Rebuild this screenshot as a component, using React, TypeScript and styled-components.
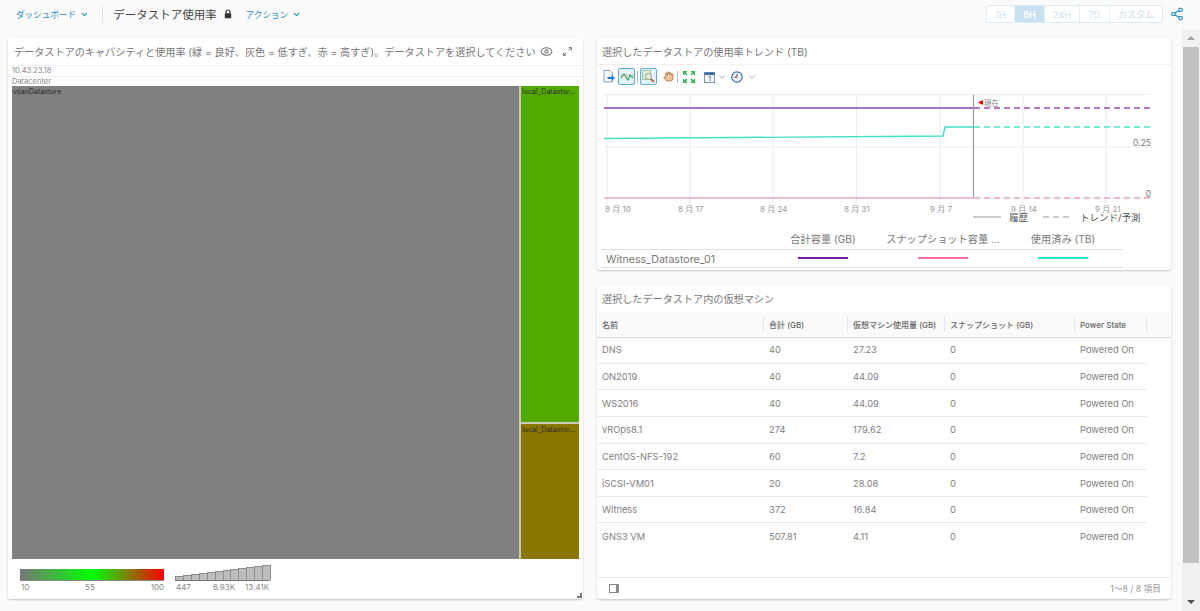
import React from "react";
import styled, { createGlobalStyle } from "styled-components";
import { ChevronDown, Eye, Hand, Share2 } from "lucide-react";

const GlobalStyle = createGlobalStyle`
  html, body { margin: 0; padding: 0; height: 100%; overflow: hidden; }
  body {
    background: #fafafa;
    font-family: "Inter", "Noto Sans CJK JP", sans-serif;
    color: #777;
  }
  * { box-sizing: border-box; }
`;

const Page = styled.div`
  width: 1200px;
  height: 611px;
  display: flex;
  flex-direction: column;
  overflow: hidden;
`;

const Header = styled.header`
  height: 30px;
  flex: none;
  display: flex;
  align-items: center;
  padding: 0 16px 2px;
`;

const NavLink = styled.a<{ $gap?: number; $lead?: number }>`
  display: flex;
  align-items: center;
  gap: 4px;
  color: #2d8ec4;
  font-size: 8.6px;
  margin-left: ${(p) => p.$lead ?? 0}px;
  margin-right: ${(p) => p.$gap ?? 0}px;
  svg { stroke-width: 3; }
`;

const HeaderDivider = styled.div`
  width: 1px;
  height: 18px;
  background: #e2e2e2;
  margin-right: 10px;
`;

const PageTitle = styled.h1`
  margin: 0 7px 0 0;
  font-size: 11.5px;
  font-weight: 400;
  color: #444;
  white-space: nowrap;
`;

const RangeGroup = styled.div`
  margin-left: auto;
  display: flex;
  height: 18px;
  border: 1.5px solid #dceaf3;
  border-radius: 2px;
  background: #fff;
`;

const RangeButton = styled.div<{ $w: number; $active?: boolean }>`
  width: ${(p) => p.$w}px;
  display: flex;
  align-items: center;
  justify-content: center;
  font-size: 9px;
  font-weight: 600;
  color: ${(p) => (p.$active ? "#fff" : "#dbe8f0")};
  background: ${(p) => (p.$active ? "#c9e1f0" : "transparent")};
  border-right: 1.5px solid #e4eff6;
  &:last-child { border-right: 0; }
`;

const ShareButton = styled.div`
  display: flex;
  margin: 0 0 0 7px;
  color: #2d8ec4;
`;

const Body = styled.div`
  flex: 1;
  display: flex;
  min-height: 0;
`;

const Content = styled.main`
  flex: 1;
  display: grid;
  grid-template-columns: 575px 574px;
  grid-template-rows: 232px 314px;
  column-gap: 14px;
  row-gap: 15px;
  padding: 8px 0 0 8px;
`;

const Card = styled.section`
  position: relative;
  background: #fff;
  border-radius: 3px;
  box-shadow: 0 1px 2px rgba(0, 0, 0, 0.22);
  display: flex;
  flex-direction: column;
  overflow: hidden;
`;

const WideCard = styled(Card)`
  grid-row: 1 / span 2;
`;

const CardHeader = styled.div<{ $plain?: boolean }>`
  height: 27px;
  flex: none;
  display: flex;
  align-items: center;
  padding: 0 5px;
  font-size: 10.15px;
  color: #777;
  white-space: nowrap;
  border-bottom: ${(p) => (p.$plain ? "0" : "1px solid #f0f0f0")};
`;

const MapHeader = styled(CardHeader)`
  padding: 0 11px 0 6px;
  justify-content: space-between;
`;

const HeaderIcons = styled.div`
  display: flex;
  flex: none;
  align-items: center;
  gap: 10px;
  color: #777;
`;

const Crumb = styled.div`
  height: 10.5px;
  line-height: 9.5px;
  padding-left: 4px;
  font-size: 7.5px;
  color: #888;
  border-top: 1px solid #f0f0f0;
`;

const Treemap = styled.div`
  margin: 0 4px;
  height: 473px;
  flex: none;
  display: flex;
  background: #c9c9b4;
  gap: 2px;
`;

const MapColumn = styled.div`
  width: 58px;
  display: flex;
  flex-direction: column;
  gap: 2px;
`;

const Tile = styled.div<{ $color: string; $grow: number }>`
  background: ${(p) => p.$color};
  flex: ${(p) => p.$grow};
  min-width: 0;
  padding: 1px 1px;
  font-size: 7.1px;
  line-height: 10px;
  color: #2c2c2c;
  white-space: nowrap;
`;

const MapLegend = styled.div`
  display: flex;
  gap: 11px;
  padding: 10px 0 0 12px;
`;

const ScaleBlock = styled.div<{ $w: number }>`
  width: ${(p) => p.$w}px;
`;

const ColorBar = styled.div`
  height: 12px;
  background: linear-gradient(90deg, #777 0%, #00ff00 50%, #ff0000 100%);
  border-bottom: 1px solid #888;
`;

const ScaleLabels = styled.div`
  display: flex;
  justify-content: space-between;
  font-size: 8px;
  line-height: 11px;
  padding: 1px 0 0 1px;
  color: #888;
  white-space: nowrap;
`;

const SizeLabels = styled(ScaleLabels)`
  justify-content: flex-start;
  span:nth-child(2) { margin: 0 10px 0 22px; }
`;

const SizeBars = styled.div`
  height: 12px;
  display: flex;
  align-items: flex-end;
  border-bottom: 1px solid #777;
`;

const SizeBar = styled.div<{ $h: number }>`
  flex: 1;
  height: ${(p) => p.$h}px;
  flex-shrink: 0;
  background: #bcbcbc;
  border: 1px solid #8d8d8d;
  border-bottom: 0;
  margin-right: -1px;
`;

const ResizeHandle = styled.div`
  position: absolute;
  right: 1px;
  bottom: 1px;
  width: 5px;
  height: 5px;
  border-right: 2px solid #777;
  border-bottom: 2px solid #777;
`;

const Toolbar = styled.div`
  height: 26px;
  flex: none;
  display: flex;
  align-items: center;
  padding: 0 0 3px 6px;
`;

const ToolSlot = styled.div<{ $active?: boolean; $ml?: number }>`
  width: ${(p) => (p.$active ? 17 : 12)}px;
  height: ${(p) => (p.$active ? 17 : 14)}px;
  margin-left: ${(p) => p.$ml ?? 0}px;
  display: flex;
  align-items: center;
  justify-content: center;
  border: ${(p) => (p.$active ? "1px solid #55aede" : "0")};
  border-radius: 2px;
  background: ${(p) => (p.$active ? "#e4f3fb" : "transparent")};
`;

const ToolSeparator = styled.div<{ $ml: number }>`
  width: 1px;
  height: 12px;
  margin-left: ${(p) => p.$ml}px;
  background: #bbb;
`;

const ToolChevron = styled.div<{ $ml: number }>`
  display: flex;
  margin-left: ${(p) => p.$ml}px;
  color: #999;
`;

const ChartArea = styled.div`
  height: 138px;
  flex: none;
  svg { display: block; }
`;

const TrendLegend = styled.div`
  display: grid;
  grid-template-columns: 162px 120px 120px 120px;
  margin: 0 0 0 4px;
  width: 522px;
`;

const LegendHead = styled.div`
  height: 21px;
  font-size: 10.2px;
  line-height: 20px;
  text-align: center;
  color: #777;
  white-space: nowrap;
  overflow: hidden;
  border-bottom: 1px solid #ddd;
`;

const LegendCell = styled.div`
  height: 18px;
  display: flex;
  align-items: center;
  justify-content: center;
  border-bottom: 1px solid #ddd;
`;

const LegendName = styled(LegendCell)`
  justify-content: flex-start;
  padding: 2px 0 0 5px;
  font-size: 10.6px;
  color: #777;
`;

const LegendSwatch = styled.div<{ $color: string }>`
  width: 50px;
  height: 2px;
  margin-top: -1px;
  background: ${(p) => p.$color};
`;

const GridHead = styled.div`
  height: 25px;
  flex: none;
  display: grid;
  grid-template-columns: 167px 84px 97px 130px 72px;
  background: #fafafa;
  box-shadow: 0 1px 1px rgba(0, 0, 0, 0.14);
`;

const HeadCell = styled.div`
  display: flex;
  align-items: center;
  padding-left: 5px;
  margin: 4px 0;
  font-size: 8px;
  font-weight: 500;
  color: #666;
  border-right: 1px solid #e6e6e6;
  white-space: nowrap;
`;

const GridBody = styled.div`
  flex: 1;
`;

const Row = styled.div`
  width: 550px;
  height: 26.65px;
  display: grid;
  grid-template-columns: 167px 84px 97px 130px 72px;
  border-bottom: 1px solid #e8e8e8;
  &:last-child { border-bottom: 0; }
`;

const Cell = styled.div`
  display: flex;
  align-items: center;
  padding-left: 5px;
  font-size: 9.3px;
  color: #808080;
  white-space: nowrap;
`;

const GridFooter = styled.div`
  height: 22px;
  flex: none;
  display: flex;
  align-items: center;
  justify-content: space-between;
  padding: 0 10px 0 12px;
  font-size: 8.7px;
  color: #999;
  border-top: 1px solid #e8e8e8;
`;

const ColumnsIcon = styled.div`
  width: 10px;
  height: 9px;
  border: 1px solid #888;
  border-right-width: 3px;
  background: linear-gradient(90deg, #fff 45%, #999 45%, #999 55%, #fff 55%);
`;

const Scrollbar = styled.aside`
  width: 18px;
  flex: none;
  margin-top: -1px;
  background: #f1f1f1;
  display: flex;
  flex-direction: column;
  align-items: center;
`;

const ScrollArrow = styled.div<{ $down?: boolean }>`
  height: 18px;
  display: flex;
  align-items: center;
  justify-content: center;
  &::before {
    content: "";
    border-left: 4px solid transparent;
    border-right: 4px solid transparent;
    ${(p) =>
      p.$down ? "border-top: 4px solid #505050;" : "border-bottom: 4px solid #a3a3a3;"}
  }
`;

const ScrollThumb = styled.div`
  width: 16px;
  height: 516px;
  background: #c1c1c1;
`;

const ScrollSpace = styled.div`
  flex: 1;
`;

const vms = [
  ["DNS", "40", "27.23", "0", "Powered On"],
  ["ON2019", "40", "44.09", "0", "Powered On"],
  ["WS2016", "40", "44.09", "0", "Powered On"],
  ["vROps8.1", "274", "179.62", "0", "Powered On"],
  ["CentOS-NFS-192", "60", "7.2", "0", "Powered On"],
  ["iSCSI-VM01", "20", "28.08", "0", "Powered On"],
  ["Witness", "372", "16.84", "0", "Powered On"],
  ["GNS3 VM", "507.81", "4.11", "0", "Powered On"],
];

const gridColumns = ["名前", "合計 (GB)", "仮想マシン使用量 (GB)", "スナップショット (GB)", "Power State"];
const barHeights = [4, 5, 6, 7, 8, 9, 10, 11, 12, 13, 14, 15];
const vLines = [607, 690, 773, 856.5, 940, 1023, 1106];
const xLabels: [number, string][] = [
  [605, "8 月 10"], [678, "8 月 17"], [760, "8 月 24"], [844, "8 月 31"],
  [930, "9 月 7"], [1011, "9 月 14"], [1095, "9 月 21"],
];

function TrendChart() {
  return (
    <svg width="574" height="138" viewBox="597 91 574 138" fontFamily="Inter, 'Noto Sans CJK JP', sans-serif">
      {vLines.map((x) => (
        <line key={x} x1={x} x2={x} y1="94.5" y2="203" stroke="#e8ecef" />
      ))}
      {[94.5, 147, 198].map((y) => (
        <line key={y} x1="604" x2="1151" y1={y} y2={y} stroke="#e8ecef" />
      ))}
      <line x1="604" x2="973" y1="108" y2="108" stroke="#8e44ad" strokeWidth="1.6" />
      <line x1="974" x2="1151" y1="108" y2="108" stroke="#9b4fc0" strokeWidth="1.4" strokeDasharray="6 4" />
      <polyline points="604,138.5 943,136 945,127 973,127" fill="none" stroke="#3fe0c8" strokeWidth="1.4" />
      <line x1="974" x2="1151" y1="127" y2="127" stroke="#4be3cc" strokeWidth="1.4" strokeDasharray="6 4" />
      <line x1="604" x2="973" y1="198" y2="198" stroke="#f0a6c8" strokeWidth="1.4" />
      <line x1="974" x2="1151" y1="198" y2="198" stroke="#f0a6c8" strokeWidth="1.4" strokeDasharray="6 4" />
      <line x1="973.5" x2="973.5" y1="95" y2="198" stroke="#999" strokeWidth="1.2" />
      <polygon points="978,102.5 983,100 983,105" fill="#f00000" />
      <text x="984" y="105.5" fontSize="7.5" fill="#888">現在</text>
      <text x="1151" y="146" fontSize="8.5" fill="#777" textAnchor="end">0.25</text>
      <text x="1151" y="197" fontSize="8.5" fill="#777" textAnchor="end">0</text>
      {xLabels.map(([x, label]) => (
        <text key={label} x={x} y="212" fontSize="8" fill="#999">{label}</text>
      ))}
      <line x1="973" x2="1001" y1="217" y2="217" stroke="#999" strokeWidth="1" />
      <text x="1009" y="220.5" fontSize="9.5" fill="#555">履歴</text>
      <line x1="1043" x2="1070" y1="217" y2="217" stroke="#999" strokeWidth="1" strokeDasharray="6 4" />
      <text x="1080" y="220.5" fontSize="9.5" fill="#555">トレンド/予測</text>
    </svg>
  );
}

function ExportIcon() {
  return (
    <svg width="12" height="13" viewBox="0 0 12 13">
      <path d="M1 .5h6l2.500 2.500v9H1z" fill="#f4f7fb" stroke="#8ca2b8" />
      <path d="M4.500 7h4V5l3.500 3-3.500 3V9h-4z" fill="#1f78c8" />
    </svg>
  );
}

function LineToggleIcon() {
  return (
    <svg width="14" height="12" viewBox="0 0 14 12">
      <path d="M0 4h14" stroke="#e58a8a" strokeWidth="1" strokeDasharray="2 1" />
      <path d="M1 7l3-4 4 6 2-5 3 3" fill="none" stroke="#33a852" strokeWidth="1.200" />
    </svg>
  );
}

function ZoomIcon() {
  return (
    <svg width="13" height="13" viewBox="0 0 13 13">
      <rect x=".5" y=".5" width="8" height="9" fill="#dcefd8" stroke="#a9c0a9" />
      <circle cx="6.500" cy="6.500" r="3" fill="#e6f2df" stroke="#8aa08a" />
      <path d="M9 9l3 3" stroke="#a86a2a" strokeWidth="1.800" />
    </svg>
  );
}

function FitIcon() {
  return (
    <svg width="12" height="12" viewBox="0 0 12 12" fill="none" stroke="#35b65a" strokeWidth="1.500">
      <path d="M0.500 4V.8H4M8 .8h3.500V4M11.500 8v3.200H8M4 11.200H.5V8M1 1l3 3M11 1L8 4M11 11L8 8M1 11l3-3" />
    </svg>
  );
}

function CalendarIcon() {
  return (
    <svg width="11" height="12" viewBox="0 0 11 12">
      <rect x=".5" y="1.500" width="10" height="10" fill="#f3f7fb" stroke="#7e96ad" />
      <rect x=".5" y="1.500" width="10" height="2.500" fill="#3c6fa5" />
      <text x="5.500" y="10" fontSize="6.500" textAnchor="middle" fill="#333">1</text>
    </svg>
  );
}

function ClockIcon() {
  return (
    <svg width="12" height="12" viewBox="0 0 12 12">
      <circle cx="6" cy="6" r="5.200" fill="#eef4fa" stroke="#3c6fa5" strokeWidth="1.200" />
      <path d="M6 3v3.200H3.300" fill="none" stroke="#444" />
    </svg>
  );
}

function LockIcon() {
  return (
    <svg width="8" height="10" viewBox="0 0 8 10">
      <path d="M2 4.500V3a2 2 0 0 1 4 0v1.500" fill="none" stroke="#333" strokeWidth="1.200" />
      <rect x=".8" y="4.300" width="6.400" height="5" rx=".6" fill="#333" />
    </svg>
  );
}

function ExpandIcon() {
  return (
    <svg width="9" height="9" viewBox="0 0 9 9" fill="none" stroke="#777">
      <path d="M.6 8.400L3.400 5.600M8.400.6L5.600 3.400M5.800.6h2.600v2.600M.6 5.800v2.600h2.600" />
    </svg>
  );
}

export default function App() {
  return (
    <Page>
      <GlobalStyle />
      <Header>
        <NavLink $gap={13}>ダッシュボード <ChevronDown size={9} /></NavLink>
        <HeaderDivider />
        <PageTitle>データストア使用率</PageTitle>
        <LockIcon />
        <NavLink $lead={14}>アクション <ChevronDown size={9} /></NavLink>
        <RangeGroup>
          <RangeButton $w={28}>1H</RangeButton>
          <RangeButton $w={30} $active>6H</RangeButton>
          <RangeButton $w={35}>24H</RangeButton>
          <RangeButton $w={30}>7D</RangeButton>
          <RangeButton $w={52}>カスタム</RangeButton>
        </RangeGroup>
        <ShareButton><Share2 size={14} /></ShareButton>
      </Header>
      <Body>
        <Content>
          <WideCard>
            <MapHeader $plain>
              データストアのキャパシティと使用率 (緑 = 良好、灰色 = 低すぎ、赤 = 高すぎ)。データストアを選択してください
              <HeaderIcons>
                <Eye size={13} />
                <ExpandIcon />
              </HeaderIcons>
            </MapHeader>
            <Crumb>10.43.23.18</Crumb>
            <Crumb>Datacenter</Crumb>
            <Treemap>
              <Tile $color="#808080" $grow={1}>vsanDatastore</Tile>
              <MapColumn>
                <Tile $color="#52aa00" $grow={337}>local_Datastor...</Tile>
                <Tile $color="#8a7700" $grow={134}>local_Datastor...</Tile>
              </MapColumn>
            </Treemap>
            <MapLegend>
              <ScaleBlock $w={144}>
                <ColorBar />
                <ScaleLabels><span>10</span><span>55</span><span>100</span></ScaleLabels>
              </ScaleBlock>
              <ScaleBlock $w={95}>
                <SizeBars>
                  {barHeights.map((h) => <SizeBar key={h} $h={h} />)}
                </SizeBars>
                <SizeLabels><span>447</span><span>6.93K</span><span>13.41K</span></SizeLabels>
              </ScaleBlock>
            </MapLegend>
            <ResizeHandle />
          </WideCard>

          <Card>
            <CardHeader>選択したデータストアの使用率トレンド (TB)</CardHeader>
            <Toolbar>
              <ToolSlot><ExportIcon /></ToolSlot>
              <ToolSlot $active $ml={3}><LineToggleIcon /></ToolSlot>
              <ToolSeparator $ml={2} />
              <ToolSlot $active $ml={2}><ZoomIcon /></ToolSlot>
              <ToolSlot $ml={5}><Hand size={11} color="#b5784a" fill="#eec39a" /></ToolSlot>
              <ToolSeparator $ml={3} />
              <ToolSlot $ml={5}><FitIcon /></ToolSlot>
              <ToolSlot $ml={8}><CalendarIcon /></ToolSlot>
              <ToolChevron $ml={2}><ChevronDown size={10} /></ToolChevron>
              <ToolSlot $ml={4}><ClockIcon /></ToolSlot>
              <ToolChevron $ml={4}><ChevronDown size={10} /></ToolChevron>
            </Toolbar>
            <ChartArea><TrendChart /></ChartArea>
            <TrendLegend>
              <LegendHead />
              <LegendHead>合計容量 (GB)</LegendHead>
              <LegendHead>スナップショット容量 ...</LegendHead>
              <LegendHead>使用済み (TB)</LegendHead>
              <LegendName>Witness_Datastore_01</LegendName>
              <LegendCell><LegendSwatch $color="#7b1fa2" /></LegendCell>
              <LegendCell><LegendSwatch $color="#ff69b4" /></LegendCell>
              <LegendCell><LegendSwatch $color="#2fe0c4" /></LegendCell>
            </TrendLegend>
          </Card>

          <Card>
            <CardHeader $plain>選択したデータストア内の仮想マシン</CardHeader>
            <GridHead>
              {gridColumns.map((c) => <HeadCell key={c}>{c}</HeadCell>)}
            </GridHead>
            <GridBody>
              {vms.map((vm) => (
                <Row key={vm[0]}>
                  {vm.map((v, i) => <Cell key={i}>{v}</Cell>)}
                </Row>
              ))}
            </GridBody>
            <GridFooter>
              <ColumnsIcon />
              <span>1～8 / 8 項目</span>
            </GridFooter>
          </Card>
        </Content>
        <Scrollbar>
          <ScrollArrow />
          <ScrollThumb />
          <ScrollSpace />
          <ScrollArrow $down />
        </Scrollbar>
      </Body>
    </Page>
  );
}
